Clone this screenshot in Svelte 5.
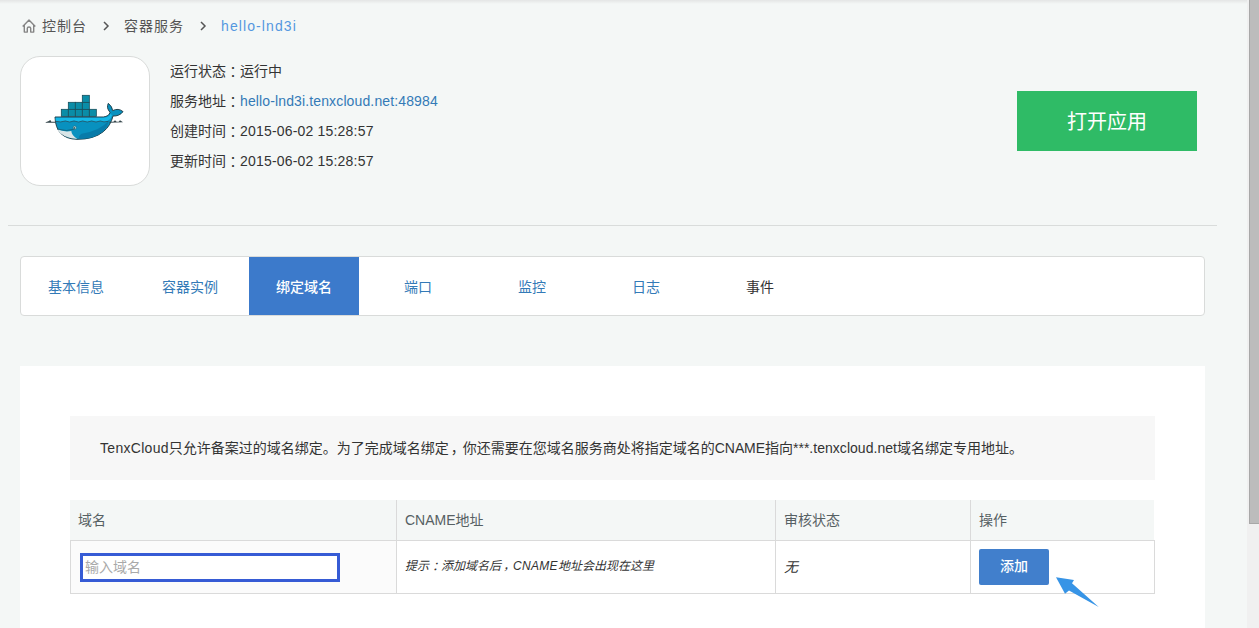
<script>
  const info = [
    { label: '运行状态', value: '运行中', kind: 'cjk' },
    { label: '服务地址', value: 'hello-lnd3i.tenxcloud.net:48984', kind: 'link' },
    { label: '创建时间', value: '2015-06-02 15:28:57', kind: 'date' },
    { label: '更新时间', value: '2015-06-02 15:28:57', kind: 'date' }
  ];
  const tabs = ['基本信息', '容器实例', '绑定域名', '端口', '监控', '日志', '事件'];
  const boxes = [[64, 73], [85, 73], [106, 73], [127, 73], [148, 73], [85, 52], [106, 52], [127, 52], [127, 31]];
</script>

<div class="page">
  <main>
    <nav class="crumbs">
      <svg class="home" width="14" height="14" viewBox="0 0 14 14"><path d="M.7 7.4 7 1l6.3 6.4M2.3 6.2v6.9h3V9.2q0-1.2 1.7-1.2t1.7 1.2v3.9h3V6.2" fill="none" stroke="#858585" stroke-width="1.4" stroke-linejoin="round" /></svg>
      <span>控制台</span>
      <svg class="chev" width="7" height="10" viewBox="0 0 7 10"><path d="m1 1 4 4-4 4" fill="none" stroke="#555" stroke-width="1.5" /></svg>
      <span>容器服务</span>
      <svg class="chev" width="7" height="10" viewBox="0 0 7 10"><path d="m1 1 4 4-4 4" fill="none" stroke="#555" stroke-width="1.5" /></svg>
      <span class="here">hello-lnd3i</span>
    </nav>

    <header>
      <div class="logo">
        <svg width="90" height="65" viewBox="0 0 270 195">
          <g fill="#0b93ae" stroke="#17505d" stroke-width="2.5">
            {#each boxes as [x, y]}
              <rect {x} {y} width="21" height="21" />
              <path d="M{x + 5} {y + 3}v15m4-15v15m4-15v15m4-15v15" stroke="#0b7d94" stroke-width="1" />
            {/each}
          </g>
          <path d="M45 96H190Q207 94 210 82Q198 68 205 55Q217 65 218 77Q235 68 249 80Q238 94 219 93Q212 122 190 140Q162 163 111 163Q47 161 45 96Z" fill="#0891bf" stroke="#22434e" stroke-width="3" />
          <path d="M47 98H191Q207 96 212 86L216 91Q211 106 200 109Q191 113 181 107Q168 115 155 107Q141 115 128 107Q115 115 102 107Q88 115 76 107Q61 115 47 107Z" fill="#15b8e7" />
          <path d="M207 106Q181 138 125 146Q113 154 118 161Q165 163 189 139Q203 126 207 106Z" fill="#087ba9" />
          <path d="M51 133Q73 142 94 138Q94 150 112 162Q67 160 51 133Z" fill="#d9e5e7" />
          <path d="M51 132Q80 141 105 132" fill="none" stroke="#185567" stroke-width="2" />
          <path d="M47 109Q62 113 76 108Q89 114 102 108Q116 114 128 108Q142 114 155 108Q168 114 181 108Q191 113 205 109" fill="none" stroke="#245263" stroke-width="2.5" />
          <path d="M17 112 25 109 31 105 34 110H46V113H17ZM208 110H220L225 106 230 110H236L240 106 249 112 208 113Z" fill="#35464b" />
          <circle cx="104" cy="128" r="5" fill="#b8d6d7" stroke="#28606d" stroke-width="1.5" /><circle cx="103" cy="129" r="2.5" fill="#15343c" />
        </svg>
      </div>
      <div class="info">
        {#each info as row}
          <div class="line">{row.label}<span class="colon">：</span><span class={row.kind}>{row.value}</span></div>
        {/each}
      </div>
      <button class="open">打开应用</button>
    </header>

    <div class="tabs">
      {#each tabs as tab, i}
        <div class="tab" class:active={i === 2} class:dark={i === 6}>{tab}</div>
      {/each}
    </div>

    <section>
      <p class="notice"><span class="brand">TenxCloud</span>只允许备案过的域名绑定。为了完成域名绑定<span class="comma">，</span>你还需要在您域名服务商处将指定域名的<span class="cname">CNAME</span>指向<span class="host">***.tenxcloud.net</span>域名绑定专用地址。</p>
      <div class="grid head">
        <div>域名</div><div>CNAME地址</div><div>审核状态</div><div>操作</div>
      </div>
      <div class="grid body">
        <div class="first"><input placeholder="输入域名" /></div>
        <div class="hint"><span>提示<span class="colon">：</span>添加域名后<span class="comma">，</span><span class="code">CNAME</span>地址会出现在这里</span></div>
        <div class="none">无</div>
        <div class="act">
          <button class="add">添加</button>
          <svg class="arrow" width="44" height="31" viewBox="0 0 44 31"><path d="m1 1.3 18 2.7-2 3.2 26.7 23.8-29.7-16.5-4 3.2Z" fill="#3794e6" /></svg>
        </div>
      </div>
    </section>
  </main>
  <aside><div class="thumb"></div></aside>
</div>

<style>
  :global(body) { margin: 0; overflow: hidden; }
  * { box-sizing: border-box; }
  .page {
    display: flex; width: 1259px; height: 628px; overflow: hidden;
    background: linear-gradient(#e4e5e5, #f4f7f6 4px);
    font: 14px/20px "Liberation Sans", "Noto Sans CJK SC", sans-serif;
    color: #333; text-spacing-trim: space-all;
  }
  .colon { font-family: "Noto Sans CJK TC", sans-serif; line-height: 1; position: relative; top: 1px; }
  .comma { position: relative; left: 2px; }
  main { width: 1247px; }
  .crumbs { display: flex; align-items: center; height: 56px; padding: 0 0 4px 22px; letter-spacing: 1px; color: #555; }
  .home { margin-right: 6px; }
  .chev { margin: 0 14px 0 16px; }
  .here { color: #5497e0; letter-spacing: 1.1px; }
  header { display: flex; height: 170px; margin: 0 30px 0 8px; padding: 0 20px 0 12px; border-bottom: 1px solid #d9dcdb; }
  .logo { width: 130px; height: 130px; border: 1px solid #d9dbda; border-radius: 20px; background: #fff; padding: 28px 0 0 19px; }
  .logo svg { display: block; }
  .info { margin: 0 0 0 20px; line-height: 30px; flex: 1; }
  .line { height: 30px; white-space: nowrap; }
  .date { letter-spacing: .19px; }
  .link { color: #337ab7; letter-spacing: .13px; }
  button { border: 0; padding: 0 0 2px; font-family: inherit; color: #fff; }
  .open { width: 180px; height: 60px; margin-top: 35px; background: #2fbb66; font-size: 20px; }
  .tabs { display: flex; gap: 4px; width: 1185px; height: 60px; margin: 30px 0 0 20px; border: 1px solid #d9dbda; border-radius: 4px; background: #fff; }
  .tab { width: 110px; line-height: 60px; height: 58px; text-align: center; color: #337ab7; }
  .tab.active { background: #3c7acb; color: #fff; font-weight: 500; }
  .tab.dark { color: #333; }
  section { width: 1185px; height: 262px; margin: 50px 0 0 20px; padding: 50px 50px 0; background: #fff; }
  .notice { margin: 0 0 20px; height: 64px; line-height: 64px; padding-left: 30px; background: #f7f7f7; white-space: nowrap; }
  .brand { letter-spacing: .3px; }
  .cname { letter-spacing: -.1px; }
  .host { letter-spacing: .03px; }
  .grid { display: grid; grid-template-columns: 326px 379px 195px 185px; }
  .grid > div { display: flex; align-items: center; border-left: 1px solid #dadada; padding-left: 8px; }
  .head { height: 40px; color: #566063; background: #f4f7f6; width: 1084px; grid-template-columns: 326px 379px 195px 184px; }
  .head > div:first-child { border-left: 0; }
  .body { height: 54px; border: 1px solid #dadada; border-left: 0; }
  .grid > .first { background: #fbfbfb; padding-left: 9px; }
  input { width: 260px; height: 29px; border: 3px solid #365bd5; border-radius: 0; padding: 0 0 0 2px; font: inherit; outline: 0; background: #fff; }
  input::placeholder { color: #a9a9a9; opacity: 1; }
  .hint { font-size: 12px; font-style: italic; padding-bottom: 3px; }
  .code { letter-spacing: .3px; }
  .none { font-style: italic; }
  .add { width: 70px; height: 36px; padding-bottom: 4px; border-radius: 2px; background: #417fcc; font-size: 14px; font-weight: 500; }
  .act { position: relative; }
  .arrow { position: absolute; left: 84px; top: 35px; }
  aside { width: 12px; height: 628px; background: #f0f0f0; padding-left: 2px; }
  .thumb { height: 524px; background: #bcbcbc; border-left: 1px solid #a8a8a8; border-bottom: 1px solid #a8a8a8; }
</style>
